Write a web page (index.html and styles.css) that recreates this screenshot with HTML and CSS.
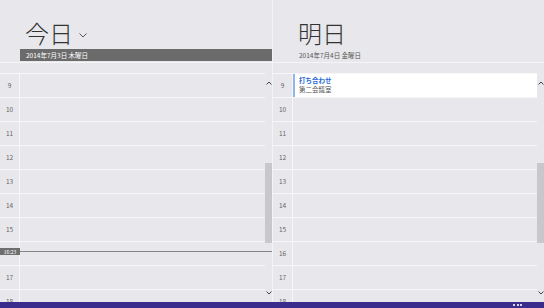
FILE: index.html
```html
<!DOCTYPE html>
<html lang="ja">
<head>
  <meta charset="UTF-8" />
  <title>予定表</title>
  <meta name="viewport" content="width=device-width, initial-scale=1" />
  <link rel="stylesheet" href="styles.css">
</head>
<body>
  <div class="main">
    <section class="day">
      <div class="day-head">
        <div class="day-title">今日
          <svg class="chev" width="8" height="5" viewBox="0 0 8 5"><polyline points="0.5,0.5 4,4 7.5,0.5" fill="none" stroke="#555" stroke-width="1"/></svg>
        </div>
        <div class="day-date today">2014年7月3日 木曜日</div>
      </div>
      <div class="allday"></div>
      <div class="grid">
        <div class="rows">
          <div class="row"><span class="hour">9</span><span class="cell"></span></div>
          <div class="row"><span class="hour">10</span><span class="cell"></span></div>
          <div class="row"><span class="hour">11</span><span class="cell"></span></div>
          <div class="row"><span class="hour">12</span><span class="cell"></span></div>
          <div class="row"><span class="hour">13</span><span class="cell"></span></div>
          <div class="row"><span class="hour">14</span><span class="cell"></span></div>
          <div class="row"><span class="hour">15</span><span class="cell"></span></div>
          <div class="row"><span class="hour"></span><span class="cell"></span></div>
          <div class="row"><span class="hour">17</span><span class="cell"></span></div>
          <div class="row"><span class="hour">18</span><span class="cell"></span></div>
          <div class="now" style="top: 178px;"><span class="now-badge">16:23</span></div>
        </div>
        <div class="scroll">
          <svg class="arrow-up" width="6" height="4" viewBox="0 0 6 4"><polyline points="0.5,3.5 3,1 5.5,3.5" fill="none" stroke="#444" stroke-width="1"/></svg>
          <div class="thumb"></div>
          <svg class="arrow-down" width="6" height="4" viewBox="0 0 6 4"><polyline points="0.5,0.5 3,3 5.5,0.5" fill="none" stroke="#444" stroke-width="1"/></svg>
        </div>
      </div>
    </section>
    <section class="day tomorrow">
      <div class="day-head">
        <div class="day-title">明日</div>
        <div class="day-date">2014年7月4日 金曜日</div>
      </div>
      <div class="allday"></div>
      <div class="grid">
        <div class="rows">
          <div class="row"><span class="hour">9</span>
            <span class="cell">
              <span class="event">
                <span class="event-title">打ち合わせ</span>
                <span class="event-place">第二会議室</span>
              </span>
            </span>
          </div>
          <div class="row"><span class="hour">10</span><span class="cell"></span></div>
          <div class="row"><span class="hour">11</span><span class="cell"></span></div>
          <div class="row"><span class="hour">12</span><span class="cell"></span></div>
          <div class="row"><span class="hour">13</span><span class="cell"></span></div>
          <div class="row"><span class="hour">14</span><span class="cell"></span></div>
          <div class="row"><span class="hour">15</span><span class="cell"></span></div>
          <div class="row"><span class="hour">16</span><span class="cell"></span></div>
          <div class="row"><span class="hour">17</span><span class="cell"></span></div>
          <div class="row"><span class="hour">18</span><span class="cell"></span></div>
        </div>
        <div class="scroll">
          <svg class="arrow-up" width="6" height="4" viewBox="0 0 6 4"><polyline points="0.5,3.5 3,1 5.5,3.5" fill="none" stroke="#444" stroke-width="1"/></svg>
          <div class="thumb"></div>
          <svg class="arrow-down" width="6" height="4" viewBox="0 0 6 4"><polyline points="0.5,0.5 3,3 5.5,0.5" fill="none" stroke="#444" stroke-width="1"/></svg>
        </div>
      </div>
    </section>
  </div>
  <div class="appbar">
    <span class="dot"></span><span class="dot"></span><span class="dot"></span>
  </div>
</body>
</html>
```

FILE: styles.css
```css
* {
  box-sizing: border-box;
}
body {
  margin: 0;
  width: 544px;
  height: 308px;
  overflow: hidden;
  background-color: #e8e7eb;
  font-family: "Noto Sans CJK JP", "Noto Sans", sans-serif;
  display: flex;
  flex-direction: column;
}
.main {
  display: flex;
  height: 302px;
}
.day {
  width: 272px;
  display: flex;
  flex-direction: column;
}
.day.tomorrow {
  border-left: 1px solid #f3f3f5;
}

/* header */
.day-head {
  height: 62px;
  padding: 19px 0 0 20px;
}
.tomorrow .day-head {
  padding-left: 25px;
}
.day-title {
  display: flex;
  align-items: center;
  gap: 6px;
  height: 28px;
  padding-left: 5px;
  font-size: 24px;
  line-height: 28px;
  font-weight: 300;
  color: #333;
}
.tomorrow .day-title {
  padding-left: 0;
}
.chev {
  margin-top: 4px;
}
.day-date {
  margin-top: 2px;
  height: 12px;
  font-size: 6.5px;
  line-height: 12px;
  color: #555;
}
.day-date.today {
  background-color: #6b6b6b;
  color: #fff;
  padding-left: 6px;
}
.tomorrow .day-date {
  padding-left: 1px;
}
.allday {
  height: 11px;
  border-top: 1px solid #f5f5f7;
}

/* grid */
.grid {
  display: flex;
  flex: 1;
  overflow: hidden;
}
.rows {
  flex: 1;
  position: relative;
}
.row {
  display: flex;
  height: 24px;
  border-top: 1px solid #f7f7f9;
}
.hour {
  width: 20px;
  border-right: 1px solid #f7f7f9;
  font-size: 6.5px;
  line-height: 23px;
  text-align: center;
  color: #666;
}
.cell {
  flex: 1;
  display: flex;
}
.event {
  flex: 1;
  display: flex;
  flex-direction: column;
  background-color: #fff;
  border-left: 2px solid #8db6ea;
  padding: 2px 0 0 4px;
  font-size: 6.5px;
  line-height: 9px;
}
.event-title {
  color: #1a66d4;
  font-weight: bold;
}
.event-place {
  color: #555;
}

/* current time */
.now {
  position: absolute;
  left: 0;
  right: -7px;
  height: 1px;
  background-color: #858585;
}
.now-badge {
  position: absolute;
  left: 0;
  top: -3px;
  width: 20px;
  height: 7px;
  background-color: #6e6e6e;
  color: #fff;
  font-size: 5px;
  line-height: 7px;
  text-align: center;
}

/* scrollbar */
.scroll {
  width: 7px;
  display: flex;
  flex-direction: column;
  align-items: center;
}
.arrow-up {
  margin-top: 8px;
}
.thumb {
  width: 7px;
  height: 80px;
  margin-top: 78px;
  background-color: #c8c8ca;
}
.arrow-down {
  margin-top: auto;
  margin-bottom: 7px;
}

/* app bar */
.appbar {
  height: 6px;
  background-color: #3a2c8c;
  display: flex;
  justify-content: flex-end;
  align-items: center;
  gap: 1.5px;
  padding-right: 22px;
}
.dot {
  width: 2px;
  height: 2px;
  background-color: #d8d4ee;
}
```
